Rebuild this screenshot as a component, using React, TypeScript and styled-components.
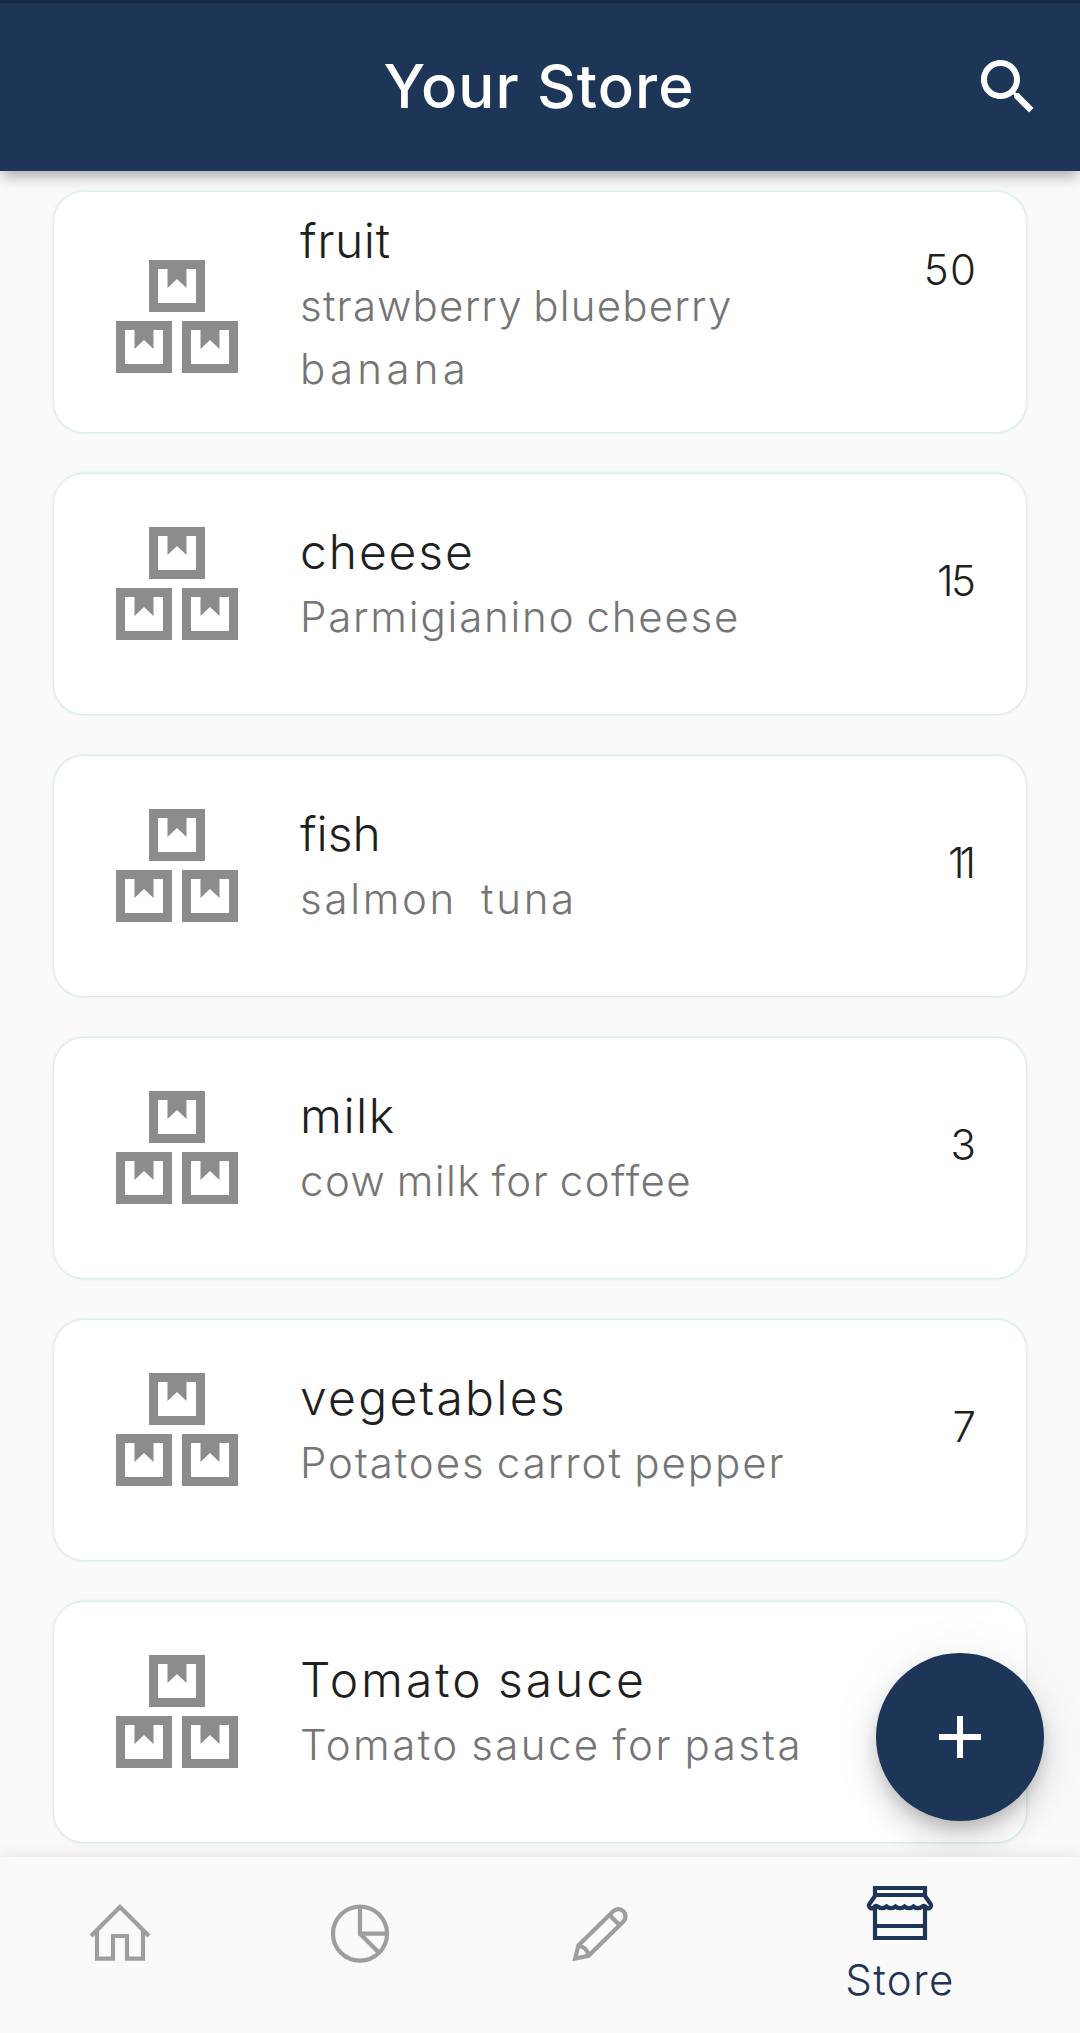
import React from 'react';
import styled, { createGlobalStyle } from 'styled-components';

const navy = '#1d3557';

const GlobalStyle = createGlobalStyle`
  body { margin: 0; background: #fafafa; }
  * { box-sizing: border-box; }
`;

const Screen = styled.div`
  position: relative;
  display: flex;
  flex-direction: column;
  width: 1080px;
  height: 2033px;
  overflow: hidden;
  background: #fafafa;
  font-family: Inter, 'Liberation Sans', sans-serif;
  font-weight: 300;
`;

const Header = styled.header`
  display: grid;
  grid-template-columns: 108px 1fr 108px;
  align-items: center;
  flex: none;
  height: 171px;
  border-top: 3px solid #182a48;
  background: ${navy};
  box-shadow: 0 6px 12px -3px rgba(0, 0, 0, 0.2), 0 10px 14px -2px rgba(0, 0, 0, 0.15);
`;

const HeaderTitle = styled.h1`
  grid-column: 2;
  margin: 0 0 3px;
  padding-right: 2px;
  color: #fff;
  font-size: 60px;
  font-weight: 500;
  line-height: 80px;
  letter-spacing: 1.1px;
  text-align: center;
`;

const SearchButton = styled.button`
  width: 72px;
  height: 72px;
  margin-bottom: 1px;
  padding: 0;
  border: 0;
  background: none;
  color: #fff;
`;

const List = styled.main`
  display: flex;
  flex: 1;
  flex-direction: column;
  gap: 42px;
  min-height: 0;
  padding: 21px 54px 0 53.5px;
`;

const Card = styled.article<{ $tall?: boolean }>`
  position: relative;
  display: flex;
  flex: none;
  align-items: flex-start;
  height: 240px;
  padding: ${p => (p.$tall ? 15 : 44)}px 50px 0 62.5px;
  border-radius: 30px;
  background: #fff;
  box-shadow: 0 0 3px 1px #cfe6e4;
`;

const BoxesIcon = styled.svg<{ $tall?: boolean }>`
  flex: none;
  width: 122px;
  height: 113px;
  margin-top: ${p => (p.$tall ? 53 : 8.5)}px;
  color: #8c8c8c;
`;

const Details = styled.div`
  width: 530px;
  margin-left: 62px;
`;

const Name = styled.h2<{ $spacing: number }>`
  margin: 0;
  color: #1f1f1f;
  font-size: 48px;
  font-weight: 300;
  line-height: 67px;
  letter-spacing: ${p => p.$spacing}px;
  word-spacing: -2px;
`;

const Description = styled.p<{ $spacing: number }>`
  margin: 0;
  color: #757575;
  font-size: 42px;
  line-height: 63px;
  letter-spacing: ${p => p.$spacing}px;
  word-spacing: -2.5px;
  white-space: pre-wrap;
`;

const Quantity = styled.span<{ $spacing: number }>`
  margin: 33px ${p => -p.$spacing}px 0 auto;
  color: #1f1f1f;
  font-size: 42px;
  line-height: 60px;
  letter-spacing: ${p => p.$spacing}px;
`;

const AddButton = styled.button`
  position: absolute;
  top: 1653px;
  right: 36px;
  display: grid;
  place-items: center;
  width: 168px;
  height: 168px;
  padding: 0;
  border: 0;
  border-radius: 50%;
  background: ${navy};
  color: #fff;
  box-shadow: 0 9px 15px -3px rgba(0, 0, 0, 0.16), 0 18px 30px rgba(0, 0, 0, 0.13),
    0 3px 54px rgba(0, 0, 0, 0.07);
`;

const NavBar = styled.nav`
  position: relative;
  display: grid;
  grid-template-columns: repeat(3, 240px) 360px;
  flex: none;
  height: 176px;
  background: #fafafa;
  box-shadow: 0 0 18px rgba(0, 0, 0, 0.11);
`;

const NavItem = styled.a<{ $active?: boolean }>`
  display: flex;
  flex-direction: column;
  align-items: center;
  padding-top: ${p => (p.$active ? 13 : 33)}px;
  color: ${p => (p.$active ? navy : '#9e9e9e')};
  font-size: 42px;
  line-height: 60px;
  letter-spacing: 1.4px;
`;

const NavIcon = styled.svg`
  display: block;
  width: 80px;
  height: 80px;
  fill: none;
  stroke: currentColor;
  stroke-width: 4.2;
`;

const NavLabel = styled.span`
  margin-top: -0.5px;
`;

const crate = 'M0 0h56v52H0zM9 9v34h38V9h-9.5v19L28 19l-9.5 9V9z';

type Line = { text: string; spacing: number };

type Item = {
  name: string;
  nameSpacing: number;
  lines: Line[];
  quantity?: string;
  quantitySpacing?: number;
};

const items: Item[] = [
  {
    name: 'fruit',
    nameSpacing: 0.6,
    lines: [{ text: 'strawberry blueberry', spacing: 1.2 }, { text: 'banana', spacing: 4.3 }],
    quantity: '50',
    quantitySpacing: 1.5,
  },
  { name: 'cheese', nameSpacing: 1.9, lines: [{ text: 'Parmigianino cheese', spacing: 1.8 }], quantity: '15', quantitySpacing: -2.4 },
  { name: 'fish', nameSpacing: 0, lines: [{ text: 'salmon  tuna', spacing: 2.7 }], quantity: '11', quantitySpacing: -5 },
  { name: 'milk', nameSpacing: 1.5, lines: [{ text: 'cow milk for coffee', spacing: 1.4 }], quantity: '3' },
  { name: 'vegetables', nameSpacing: 2.3, lines: [{ text: 'Potatoes carrot pepper', spacing: 1.95 }], quantity: '7' },
  { name: 'Tomato sauce', nameSpacing: 2.95, lines: [{ text: 'Tomato sauce for pasta', spacing: 2.4 }] },
];

export default function App() {
  return (
    <Screen>
      <GlobalStyle />
      <Header>
        <HeaderTitle>Your Store</HeaderTitle>
        <SearchButton aria-label="Search">
          <svg width="72" height="72" viewBox="0 0 24 24" fill="currentColor">
            <path d="M15.5 14h-.79l-.28-.27C15.41 12.59 16 11.11 16 9.5 16 5.91 13.09 3 9.5 3S3 5.91 3 9.5 5.91 16 9.5 16c1.61 0 3.09-.59 4.23-1.57l.27.28v.79l5 4.99L20.49 19l-4.99-5zm-6 0C7.01 14 5 11.99 5 9.5S7.01 5 9.5 5 14 7.01 14 9.5 11.99 14 9.5 14z" />
          </svg>
        </SearchButton>
      </Header>
      <List>
        {items.map(item => {
          const tall = item.lines.length > 1;
          return (
            <Card key={item.name} $tall={tall}>
              <BoxesIcon $tall={tall} viewBox="0 0 122 113" fill="currentColor" fillRule="evenodd">
                <path d={crate} transform="translate(33 0)" />
                <path d={crate} transform="translate(0 61)" />
                <path d={crate} transform="translate(66 61)" />
              </BoxesIcon>
              <Details>
                <Name $spacing={item.nameSpacing}>{item.name}</Name>
                {item.lines.map(line => (
                  <Description key={line.text} $spacing={line.spacing}>{line.text}</Description>
                ))}
              </Details>
              {item.quantity && <Quantity $spacing={item.quantitySpacing ?? 0}>{item.quantity}</Quantity>}
            </Card>
          );
        })}
      </List>
      <AddButton aria-label="Add item">
        <svg width="42" height="42" viewBox="0 0 42 42" stroke="currentColor" strokeWidth="6">
          <path d="M21 0v42M0 21h42" />
        </svg>
      </AddButton>
      <NavBar>
        <NavItem aria-label="Home">
          <NavIcon viewBox="0 0 80 80">
            <path d="M11 46 40 17l29 29M17 41v27.7h16V46h14v22.7h16V41" />
          </NavIcon>
        </NavItem>
        <NavItem aria-label="Statistics">
          <NavIcon viewBox="0 0 80 80">
            <circle cx="40" cy="43.7" r="27" />
            <path d="M40 17v26.7h27M40 43.7l19 19" />
          </NavIcon>
        </NavItem>
        <NavItem aria-label="Edit">
          <NavIcon viewBox="0 0 80 80">
            <path d="M15.2 68.5 18.3 55.5 53.2 21.2A7.2 7.2 0 0 1 63.4 31.4L28.5 65.8ZM49.5 25 59.7 35.3M18.5 56Q27 56.5 28.5 65.8" />
          </NavIcon>
        </NavItem>
        <NavItem $active>
          <NavIcon viewBox="0 0 80 80">
            <path d="M15 26V18h50v8M15 25h50M15 37v31h50V37M15 56h50" />
            <path d="M15 26 9.4 34C8 37 10.5 39 13 38.2q2.4-3.2 4.7-1.7q4.4 3.4 8.9 0q4.4 3.4 8.9 0q4.5 3.4 9 0q4.4 3.4 8.9 0q4.4 3.4 8.9 0q2.3-1.5 4.7 1.7C69.5 39 72 37 70.6 34L65 26" />
          </NavIcon>
          <NavLabel>Store</NavLabel>
        </NavItem>
      </NavBar>
    </Screen>
  );
}
